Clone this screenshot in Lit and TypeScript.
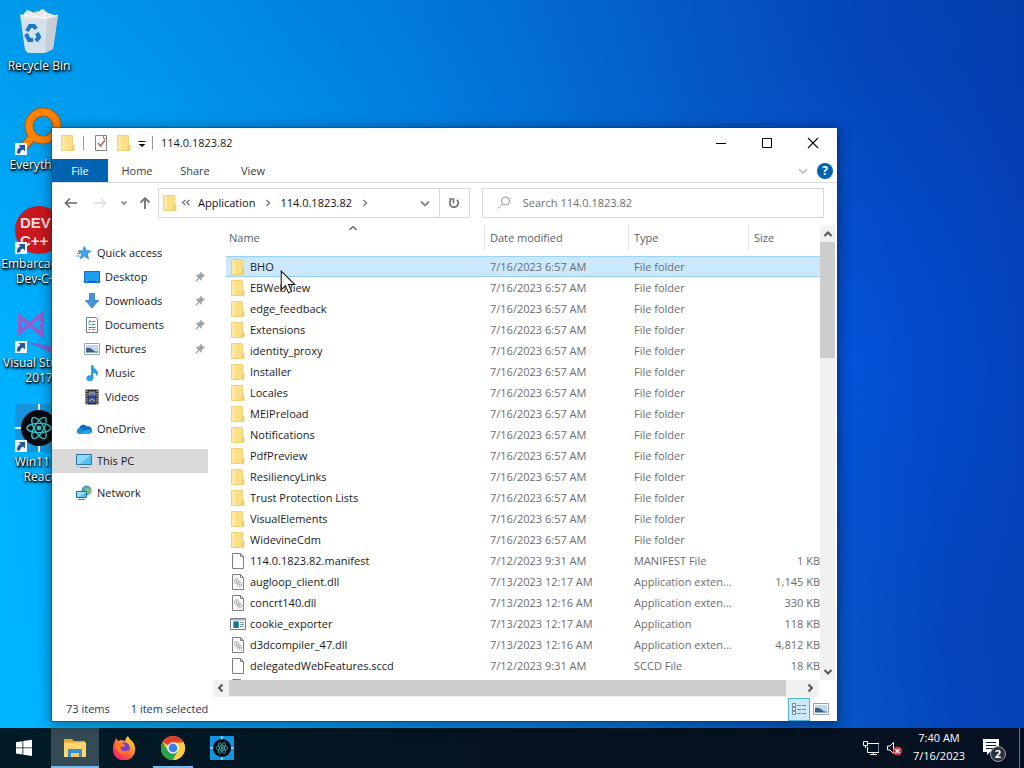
// src/app.ts
import { LitElement, html, css, svg } from 'lit';
import { customElement, state } from 'lit/decorators.js';
import { classMap } from 'lit/directives/class-map.js';

interface FileRow {
  name: string;
  date: string;
  type: string;
  size?: string;
  icon: string;
}

interface NavItem {
  label: string;
  icon: string;
  sub?: boolean;
  pinned?: boolean;
  gap?: boolean;
}

const folders = [
  'BHO', 'EBWebView', 'edge_feedback', 'Extensions', 'identity_proxy', 'Installer', 'Locales',
  'MEIPreload', 'Notifications', 'PdfPreview', 'ResiliencyLinks', 'Trust Protection Lists',
  'VisualElements', 'WidevineCdm',
];

const files: FileRow[] = [
  ...folders.map((name) => ({ name, date: '7/16/2023 6:57 AM', type: 'File folder', icon: 'folder' })),
  { name: '114.0.1823.82.manifest', date: '7/12/2023 9:31 AM', type: 'MANIFEST File', size: '1 KB', icon: 'file' },
  { name: 'augloop_client.dll', date: '7/13/2023 12:17 AM', type: 'Application exten...', size: '1,145 KB', icon: 'dll' },
  { name: 'concrt140.dll', date: '7/13/2023 12:16 AM', type: 'Application exten...', size: '330 KB', icon: 'dll' },
  { name: 'cookie_exporter', date: '7/13/2023 12:17 AM', type: 'Application', size: '118 KB', icon: 'exe' },
  { name: 'd3dcompiler_47.dll', date: '7/13/2023 12:16 AM', type: 'Application exten...', size: '4,812 KB', icon: 'dll' },
  { name: 'delegatedWebFeatures.sccd', date: '7/12/2023 9:31 AM', type: 'SCCD File', size: '18 KB', icon: 'file' },
  { name: '', date: '', type: '', icon: 'dll' },
];

const navItems: NavItem[] = [
  { label: 'Quick access', icon: 'star' },
  { label: 'Desktop', icon: 'desktop', sub: true, pinned: true },
  { label: 'Downloads', icon: 'download', sub: true, pinned: true },
  { label: 'Documents', icon: 'document', sub: true, pinned: true },
  { label: 'Pictures', icon: 'picture', sub: true, pinned: true },
  { label: 'Music', icon: 'music', sub: true },
  { label: 'Videos', icon: 'video', sub: true },
  { label: 'OneDrive', icon: 'cloud', gap: true },
  { label: 'This PC', icon: 'pc', gap: true },
  { label: 'Network', icon: 'network', gap: true },
];

// 16x16 glyphs
const small: Record<string, unknown> = {
  folder: svg`<path d="M1.500.500h11v9.500H14v5.500H1.500z" fill="#fcdf87" stroke="#eccb66" stroke-width=".8"/><path d="M2 1h3v14H2z" fill="#ffe8a0"/><path d="M11.500 10.500H14V15h-2.500z" fill="#f0cd68"/>`,
  file: svg`<path d="M2.500.5h8l3 3v12h-11z" fill="#fdfdfd" stroke="#7e7e7e"/><path d="M10.500.5v3h3" fill="none" stroke="#7e7e7e"/>`,
  dll: svg`<path d="M2.500.5h8l3 3v12h-11z" fill="#fdfdfd" stroke="#7e7e7e"/><path d="M10.500.5v3h3" fill="none" stroke="#7e7e7e"/><g fill="none" stroke="#8b9094"><circle cx="6.500" cy="7" r="2.300" stroke-dasharray="1.500 .6"/><circle cx="6.500" cy="7" r=".6"/><circle cx="9.500" cy="10.500" r="2.300" stroke-dasharray="1.500 .6"/><circle cx="9.500" cy="10.500" r=".6"/></g>`,
  exe: svg`<path d="M.5 2.500h15v11H.5z" fill="#fff" stroke="#75808a"/><path d="M1 3h14v1.500H1z" fill="#a9b4bd"/><path d="M3 5.500h6V12H3z" fill="#38a3b0"/><path d="M4.500 5.500H8V12H4.500z" fill="#1b6f86"/><path d="M10 6.500h4M10 8.500h4M10 10.500h4" stroke="#8a959e"/>`,
  star: svg`<path d="M8.500 1.500l1.700 4.300 4.600.2-3.600 3 1.300 4.700-4-2.600-4.200 2.600 1.400-4.700L2 6l4.700-.2z" fill="#3ea6ea" stroke="#1f7cc7" stroke-width=".8"/><path d="M1 8.500h3M0 11h4" stroke="#3ea6ea"/>`,
  desktop: svg`<path d="M.5 2.500h15v11H.5z" fill="#1e9bf5" stroke="#0b6fc2"/><path d="M1 12.500h14" stroke="#0a5aa5"/><path d="M2 12.500h1M13 12.500h1" stroke="#cfe9ff"/>`,
  download: svg`<path d="M5.500.500h5v7h4L8 15 1.500 7.500h4z" fill="#4795e0" stroke="#2b76c4" stroke-width=".8"/>`,
  document: svg`<path d="M2.500.5h9l2 2v13h-11z" fill="#fff" stroke="#72808c"/><path d="M4.500 5.500l1.500-2 1 2" fill="none" stroke="#1c87a3"/><path d="M8 4.500h3.500M4.500 7.500h2M8 7.500h3.500M4.500 10.500h7M4.500 12.500h2M8 12.500h3.500" stroke="#4794a8"/>`,
  picture: svg`<path d="M.5 2.500h15v11H.5z" fill="#fff" stroke="#98a2aa"/><path d="M2 4h12v8H2z" fill="#bcd8ee"/><path d="M2 7q4-1 7 2t5 1v2H2z" fill="#3d5f7c"/><path d="M2 11h12v1H2z" fill="#89aaca"/>`,
  music: svg`<path d="M7.500.500h1.500q.5 3 3 4.500t1 5.500q-1-3-4-3.500V13a3.200 2.700 0 1 1-1.500-2z" fill="#2da0e4" stroke="#1784cd" stroke-width=".6"/>`,
  video: svg`<path d="M1.500.500h13v15h-13z" fill="#27292d"/><path d="M4.500 2h7v5.500h-7z" fill="#5061c2"/><path d="M4.500 8.500h7V14h-7z" fill="#4158ae"/><path d="M4.500 6l2-3 2 2 1-2 2 3M5 12l3-2 3 2" fill="none" stroke="#c6b84b"/><path d="M3 1.500v14M13 1.500v14" stroke="#e4e4e4" stroke-dasharray="1.500 1"/>`,
  cloud: svg`<path d="M3.500 13a3 3 0 0 1-.5-5.800A4.500 4.500 0 0 1 11 5.500a3.800 3.800 0 0 1 2 7.500z" fill="#0f6cbd"/><path d="M3.500 13a3 3 0 0 1-.5-5.800q2-.8 4 .8l5 5z" fill="#1490df"/><path d="M4 13l6-4 3-.5a2.300 2.300 0 0 1 0 4.500z" fill="#28a8ea"/>`,
  pc: svg`<path d="M.5 1.500h15v10H.5z" fill="#55c0f2" stroke="#2b759f"/><path d="M1 2h14L4 11H1z" fill="#8ddafa"/><path d="M4 14.500h9" stroke="#5f99b7"/><path d="M1 13.500h2M14 13.500h1" stroke="#9cb9c8"/>`,
  network: svg`<circle cx="10.500" cy="5.500" r="5" fill="#4f9cb5"/><path d="M7 2q3 1 2 4t4 3q3-2 2-5" fill="#86bd7b"/><path d="M.5 6.500h10v6H.5z" fill="#5bc1f1" stroke="#236fa6"/><path d="M1 7h9l-8 5H1z" fill="#9be0fb"/><path d="M2 14.500h7" stroke="#4889ad"/>`,
  pin: svg`<path d="M8.500 3l4 4-1.200.3-1.800 1.900-.2 2.300-2.200-2.200L3.500 13l2.800-4.500L4.200 6.300l2.300-.2L8.300 4.200z" fill="#9aa3aa" stroke="#9aa3aa" stroke-width=".6"/>`,
  check: svg`<path d="M2.500.5h11v15h-11z" fill="#fbfafa" stroke="#8a8380"/><path d="M10.500.5v3h3" fill="none" stroke="#8a8380"/><path d="M5 8l2.500 3L12 5" fill="none" stroke="#a2695a" stroke-width="1.400"/>`,
  qat: svg`<path d="M4.500 6.500h7" stroke="#111"/><path d="M4.500 9h7L8 12z" fill="#111"/>`,
  back: svg`<path d="M14 8H2.500M7 3.500L2.500 8 7 12.500" fill="none" stroke="#6a6a6a" stroke-width="1.700"/>`,
  forward: svg`<path d="M2 8h11.500M9 3.500l4.500 4.500L9 12.500" fill="none" stroke="#dcdcdc" stroke-width="1.400"/>`,
  up: svg`<path d="M8 14V3M3.500 7.500L8 3l4.500 4.500" fill="none" stroke="#777" stroke-width="1.900"/>`,
  recent: svg`<path d="M5.500 6.500L8 9l2.500-2.500" fill="none" stroke="#888" stroke-width="1.700"/>`,
  down: svg`<path d="M4 6.500l4 4 4-4" fill="none" stroke="#888" stroke-width="1.900"/>`,
  downLight: svg`<path d="M4 6l4 4 4-4" fill="none" stroke="#b5b5b5" stroke-width="1.500"/>`,
  crumb: svg`<path d="M6.500 5l3 3-3 3" fill="none" stroke="#777" stroke-width="1.400"/>`,
  crumbs: svg`<path d="M7.500 5l-3 2.500 3 2.500M11.500 5l-3 2.500 3 2.500" fill="none" stroke="#666" stroke-width="1.100"/>`,
  refresh: svg`<path d="M11 4.800A4.300 4.300 0 1 1 5 4.800" fill="none" stroke="#777" stroke-width="1.800"/><path d="M3 4h4.500v4.500" fill="none" stroke="#777" stroke-width="1.600"/>`,
  search: svg`<circle cx="9.500" cy="6" r="4" fill="none" stroke="#909090"/><path d="M6.500 9L2 13.500" stroke="#909090"/>`,
  minimize: svg`<path d="M3 8.500h10" stroke="#000"/>`,
  maximize: svg`<path d="M3.500 3.500h9v9h-9z" fill="none" stroke="#000"/>`,
  close: svg`<path d="M3 3l10 10M13 3L3 13" stroke="#000" stroke-width="1.100"/>`,
  arrowUp: svg`<path d="M4.500 10L8 6.500l3.500 3.500" fill="none" stroke="#555" stroke-width="2"/>`,
  arrowDown: svg`<path d="M4.500 6L8 9.500 11.500 6" fill="none" stroke="#555" stroke-width="2"/>`,
  arrowLeft: svg`<path d="M9.500 4.500L6 8l3.500 3.500" fill="none" stroke="#555" stroke-width="2"/>`,
  arrowRight: svg`<path d="M5.500 4.500L9 8l-3.500 3.500" fill="none" stroke="#555" stroke-width="2"/>`,
  sort: svg`<path d="M4.500 10L8 6.500l3.500 3.500" fill="none" stroke="#555" stroke-width="1.100"/>`,
  details: svg`<path d="M1.500 2.500h3v3h-3zM1.500 6.500h3v3h-3zM1.500 10.500h3v3h-3z" fill="#fff" stroke="#728790"/><path d="M6 4.500h4M11 4.500h4M6 8.500h4M11 8.500h4M6 12.500h4M11 12.500h4" stroke="#728790"/>`,
  monitor: svg`<path d="M3.500 3.500H16v9H4.500V7" fill="none" stroke="#fff"/><path d="M.5 1.500h4v4h-4z" fill="#0a1524" stroke="#fff"/><path d="M2.500 5.500V8M7 14.500h7M10.500 12.500v2" stroke="#fff"/>`,
  muted: svg`<path d="M1.500 6h2.500l3.500-3.500v11L4 10H1.500z" fill="none" stroke="#fff"/><circle cx="11.500" cy="11" r="4.500" fill="#d5333f"/><path d="M9.500 9l4 4M13.500 9l-4 4" stroke="#fff" stroke-width="1.300"/>`,
};

const glyph = (name: string) =>
  html`<svg class="glyph" viewBox="0 0 16 16" aria-hidden="true">${small[name]}</svg>`;

const atom = svg`
  <path d="M0 0h24v24H0z" fill="#1593dd"/><path d="M12 0v24M0 12h24" stroke="#e5f6ff" stroke-width="1"/>
  <circle cx="12" cy="12" r="9" fill="#06090d"/>
  <g fill="none" stroke="#38bfc6" stroke-width=".7">
    <ellipse cx="12" cy="12" rx="6" ry="2.300"/>
    <ellipse cx="12" cy="12" rx="6" ry="2.300" transform="rotate(60 12 12)"/>
    <ellipse cx="12" cy="12" rx="6" ry="2.300" transform="rotate(120 12 12)"/>
  </g>
  <circle cx="12" cy="12" r="1.200" fill="#38bfc6"/>`;

const shortcut = svg`<path d="M0 36h12v12H0z" fill="#f5f8fb"/><path d="M2 46.500q-.5-5 3.500-6.500l-2-2H10v6.500l-2-2q-2.500.5-3 4z" fill="#22579f"/>`;

const desktopIcons = [
  {
    label: 'Recycle Bin',
    art: svg`
      <path d="M7 8l5-6 8 3 8-4 5 4 9 3-3 3H9z" fill="#f4f6f8"/>
      <path d="M12 5l4 3 5-5 3 4 6-4 3 5" fill="none" stroke="#c8ced4"/>
      <path d="M5 7h38l-5 34-8 4H13l-3-3z" fill="#e2e6ea" opacity=".93"/>
      <path d="M32 10l11-3-5 34-8 4z" fill="#c3cad0" opacity=".8"/>
      <path d="M5 7l27 3 11-3" fill="none" stroke="#fff"/>
      <g fill="none" stroke="#1976c8" stroke-width="4">
        <path d="M12 23l3-5h4l2 3"/><path d="M22 25l2 4-3 4"/><path d="M18 32h-4l-3-6"/>
      </g>`,
  },
  {
    label: 'Everything',
    link: true,
    art: svg`
      <path d="M18 29L7 42" stroke="#9b5a19" stroke-width="9"/>
      <circle cx="28" cy="19" r="14" fill="none" stroke="#9b5a19" stroke-width="9"/>
      <circle cx="28" cy="19" r="14" fill="none" stroke="#ff8200" stroke-width="7"/>
      <path d="M19 28L7 42" stroke="#ff8200" stroke-width="7"/>`,
  },
  {
    label: 'Embarcadero Dev-C++',
    link: true,
    art: svg`
      <circle cx="24" cy="24" r="24" fill="#c9181f"/>
      <text class="dev" x="5" y="22">DEV</text>
      <text class="dev" x="5" y="40">C++</text>`,
  },
  {
    label: 'Visual Studio 2017',
    link: true,
    art: svg`
      <path d="M5 12v15l22-18v21z" fill="none" stroke="#8f5fd0" stroke-width="4"/>
      <path d="M12 37l24 4v7l-8-4z" fill="#7d5fce"/>`,
  },
  {
    label: 'Win11 in React',
    link: true,
    art: svg`<g transform="scale(2)">${atom}</g>`,
  },
];

@customElement('app-root')
export class AppRoot extends LitElement {
  static styles = css`
    :host {
      display: flex;
      flex-direction: column;
      height: 100vh;
      overflow: hidden;
      font-family: 'Open Sans', 'Noto Sans', sans-serif;
      font-size: 11px;
      line-height: 16px;
      color: #1a1a1a;
      background:
        radial-gradient(ellipse 240px 320px at 83% 46%, rgba(0, 86, 240, 0.5), rgba(0, 80, 225, 0)),
        linear-gradient(180deg, rgba(0, 70, 160, 0.2), rgba(0, 70, 160, 0) 45%),
        linear-gradient(82deg, #00b6ff 0%, #00a4fa 22%, #0086e8 46%, #0560d0 68%, #0544ba 86%, #043cb0 100%);
    }
    * {
      box-sizing: border-box;
    }
    button, input {
      font: inherit;
      color: inherit;
      margin: 0;
      padding: 0;
      border: 0;
      background: none;
    }
    button {
      display: flex;
      align-items: center;
      justify-content: center;
    }
    a {
      color: inherit;
      text-decoration: none;
    }
    .glyph {
      width: 16px;
      height: 16px;
      flex: none;
      display: block;
    }
    .desktop {
      position: relative;
      flex: 1;
      min-height: 0;
    }
    .shortcuts {
      display: flex;
      flex-direction: column;
      width: 78px;
      height: 100%;
      overflow: hidden;
    }
    .shortcut {
      display: flex;
      flex-direction: column;
      align-items: center;
      flex: none;
      height: 99px;
      padding-top: 8px;
      gap: 2px;
      text-align: center;
      color: #fff;
      font-size: 12px;
      line-height: 15px;
      text-shadow: 1px 1px 2px #000, 0 1px 2px #000, 1px 2px 3px rgba(0, 0, 0, 0.7);
    }
    .shortcut svg {
      width: 48px;
      height: 48px;
      flex: none;
    }
    .dev {
      font: bold 15px 'Liberation Sans', sans-serif;
      fill: #f7dede;
      text-shadow: none;
    }

    /* Explorer window */
    .window {
      position: absolute;
      left: 51px;
      top: 127px;
      right: 186px;
      bottom: 6px;
      display: flex;
      flex-direction: column;
      background: #fff;
      background-clip: padding-box;
      border: 1px solid rgba(0, 60, 120, 0.4);
      box-shadow: 0 2px 12px rgba(0, 0, 0, 0.45);
    }
    .titlebar {
      display: flex;
      align-items: center;
      height: 31px;
      flex: none;
      padding: 0 1px 1px 8px;
    }
    .divider {
      width: 1px;
      height: 14px;
      background: #999;
    }
    .quick {
      display: flex;
      align-items: center;
      gap: 7px;
      margin-right: 8px;
    }
    .quick .glyph + .divider + .glyph {
      margin-left: 2px;
    }
    .quick .glyph:last-of-type {
      margin: 0 -5px;
    }
    .title {
      flex: 1;
    }
    .caption {
      width: 46px;
      height: 30px;
    }
    .tabs {
      display: flex;
      align-items: center;
      flex: none;
      height: 24px;
      border-bottom: 1px solid #dadbdc;
      padding-right: 4px;
    }
    .tab {
      width: 58px;
      height: 23px;
      color: #3b3b3b;
    }
    .tab.file {
      width: 56px;
      background: #0063b1;
      color: #fff;
    }
    .tabs .expand {
      margin-left: auto;
      margin-right: 6px;
    }
    .help {
      width: 16px;
      height: 16px;
      border-radius: 50%;
      background: #0063b1;
      color: #fff;
      font-weight: bold;
      font-size: 12px;
    }
    .location {
      display: flex;
      flex: none;
      height: 41px;
      padding: 5px 13px 6px 5px;
    }
    .history {
      display: flex;
    }
    .history button {
      width: 28px;
    }
    .history .forward {
      width: 30px;
    }
    .history .recent {
      width: 18px;
    }
    .history .up {
      width: 24px;
      margin-right: 1px;
    }
    .address {
      display: flex;
      align-items: center;
      flex: 15;
      border: 1px solid #d9d9d9;
      padding-left: 3px;
    }
    .address .crumb {
      color: #111;
      margin: 0 5px 0 4px;
    }
    .address .history-drop {
      margin-left: auto;
      width: 28px;
      height: 28px;
    }
    .address .refresh {
      width: 30px;
      height: 28px;
      border-left: 1px solid #d9d9d9;
    }
    .search {
      display: flex;
      align-items: center;
      flex: 16;
      margin-left: 12px;
      padding-left: 13px;
      gap: 11px;
      border: 1px solid #d9d9d9;
    }
    .search input {
      flex: 1;
      min-width: 0;
      outline: none;
    }
    .search input::placeholder {
      color: #6d6d6d;
      opacity: 1;
    }
    .body {
      display: flex;
      flex: 1;
      min-height: 0;
    }
    .nav {
      flex: none;
      width: 161px;
      padding: 17px 5px 0 0;
      overflow: hidden;
    }
    .nav-item {
      display: flex;
      align-items: center;
      gap: 5px;
      height: 24px;
      padding-left: 24px;
    }
    .nav-item.sub {
      padding-left: 32px;
    }
    .nav-item.gap {
      margin-top: 8px;
    }
    .nav-item.current {
      background: #d9d9d9;
    }
    .nav-item .pin {
      margin-left: auto;
    }
    .files {
      display: flex;
      flex-direction: column;
      flex: 1;
      min-width: 0;
    }
    .view {
      display: flex;
      flex: 1;
      min-height: 0;
      padding-right: 2px;
    }
    .rows {
      flex: 1;
      min-width: 0;
      overflow: hidden;
      padding-left: 13px;
    }
    table {
      width: 100%;
      table-layout: fixed;
      border-collapse: collapse;
    }
    th {
      position: relative;
      height: 32px;
      padding: 0 0 5px;
      font-weight: normal;
      text-align: left;
      color: #56616e;
    }
    th span {
      display: block;
      height: 27px;
      padding-left: 5px;
      line-height: 28px;
      border-left: 1px solid #e5e5e5;
    }
    th:first-child span {
      padding-left: 2px;
      border-color: transparent;
    }
    th .glyph {
      position: absolute;
      left: calc(50% - 10px);
      top: -4px;
    }
    .date {
      width: 144px;
    }
    .type {
      width: 120px;
    }
    .size {
      width: 72px;
    }
    td {
      height: 21px;
      padding: 0 0 0 6px;
      white-space: nowrap;
      color: #6d6d6d;
    }
    td.name {
      padding-left: 4px;
      color: #1a1a1a;
    }
    td.bytes {
      padding: 0;
      text-align: right;
    }
    .entry {
      display: flex;
      align-items: center;
      gap: 4px;
    }
    tr.selected td {
      background: #cce8ff;
      box-shadow: inset 0 1px #99d1ff, inset 0 -1px #99d1ff;
    }
    .vscroll {
      display: flex;
      flex-direction: column;
      width: 15px;
      margin-top: 2px;
      background: #f1f1f1;
    }
    .vscroll button {
      width: 15px;
      height: 16px;
    }
    .vtrack {
      flex: 1;
    }
    .vthumb {
      height: 27.5%;
      background: #cdcdcd;
    }
    .hscroll {
      display: flex;
      flex: none;
      height: 17px;
      margin-right: 18px;
      padding-bottom: 1px;
      background: #f1f1f1;
    }
    .hscroll button {
      width: 16px;
      height: 16px;
    }
    .htrack {
      flex: 1;
    }
    .hthumb {
      width: 97%;
      height: 16px;
      background: #cdcdcd;
    }
    .status {
      display: flex;
      align-items: center;
      flex: none;
      height: 24px;
      padding: 0 8px 0 14px;
      gap: 21px;
      color: #26375c;
    }
    .views {
      display: flex;
      margin-left: auto;
      align-items: center;
      gap: 3px;
    }
    .views button {
      width: 16px;
      height: 23px;
    }
    .views .active {
      width: 22px;
      background: #cbe9f7;
      border: 1px solid #4fb0d8;
    }
    .pointer {
      position: absolute;
      left: 280px;
      top: 270px;
      width: 16px;
      height: 26px;
    }

    /* Taskbar */
    .taskbar {
      display: flex;
      align-items: stretch;
      flex: none;
      height: 40px;
      color: #fff;
      background: linear-gradient(90deg, #031b28, #04131f 50%, #061022);
    }
    .apps {
      display: flex;
      gap: 1px;
      flex: 1;
    }
    .app {
      width: 48px;
      border-bottom: 2px solid transparent;
      border-top: 2px solid transparent;
    }
    .app svg {
      width: 24px;
      height: 24px;
    }
    .app.start {
      width: 50px;
      padding-right: 2px;
    }
    .app.focused {
      background: #344a55;
      border-top-color: #344a55;
      border-bottom-color: #76b9ed;
    }
    .app.running {
      width: 40px;
      margin: 0 4px;
      border-bottom-color: #76b9ed;
    }
    .tray {
      display: flex;
      align-items: center;
    }
    .tray .glyph {
      margin-right: 7px;
    }
    .clock {
      width: 60px;
      text-align: center;
      line-height: 18px;
      padding-bottom: 2px;
      margin-right: 11px;
    }
    .notify svg {
      width: 28px;
      height: 28px;
    }
    .badge {
      font: bold 11px 'Open Sans', sans-serif;
      fill: #fff;
    }
    .peek {
      width: 5px;
      height: 40px;
      margin-left: 11px;
      border-left: 1px solid #6b7482;
    }
  `;

  @state()
  private selected = 'BHO';

  private renderWindow() {
    return html`
      <section class="window" aria-label="File Explorer">
        <header class="titlebar">
          <div class="quick">
            ${glyph('folder')}
            <span class="divider"></span>
            ${glyph('check')}
            ${glyph('folder')}
            ${glyph('qat')}
            <span class="divider"></span>
          </div>
          <span class="title">114.0.1823.82</span>
          <button class="caption" aria-label="Minimize">${glyph('minimize')}</button>
          <button class="caption" aria-label="Maximize">${glyph('maximize')}</button>
          <button class="caption" aria-label="Close">${glyph('close')}</button>
        </header>

        <div class="tabs">
          <button class="tab file">File</button>
          <button class="tab">Home</button>
          <button class="tab">Share</button>
          <button class="tab">View</button>
          <button class="expand" aria-label="Expand the Ribbon">${glyph('downLight')}</button>
          <button class="help" aria-label="Help">?</button>
        </div>

        <div class="location">
          <div class="history">
            <button aria-label="Back">${glyph('back')}</button>
            <button class="forward" aria-label="Forward">${glyph('forward')}</button>
            <button class="recent" aria-label="Recent locations">${glyph('recent')}</button>
            <button class="up" aria-label="Up">${glyph('up')}</button>
          </div>
          <div class="address">
            ${glyph('folder')}
            <button aria-label="Parent folders">${glyph('crumbs')}</button>
            <button class="crumb">Application</button>
            ${glyph('crumb')}
            <button class="crumb">114.0.1823.82</button>
            ${glyph('crumb')}
            <button class="history-drop" aria-label="Previous locations">${glyph('down')}</button>
            <button class="refresh" aria-label="Refresh">${glyph('refresh')}</button>
          </div>
          <label class="search">
            ${glyph('search')}
            <input type="text" aria-label="Search" placeholder="Search 114.0.1823.82" />
          </label>
        </div>

        <div class="body">
          <nav class="nav">
            ${navItems.map(
              (item) => html`
                <a
                  href="#"
                  class=${classMap({
                    'nav-item': true,
                    sub: !!item.sub,
                    gap: !!item.gap,
                    current: item.label === 'This PC',
                  })}
                >
                  ${glyph(item.icon)} ${item.label}
                  ${item.pinned ? html`<span class="pin">${glyph('pin')}</span>` : ''}
                </a>
              `
            )}
          </nav>
          ${this.renderFiles()}
        </div>

        <footer class="status">
          <span>73 items</span>
          <span>1 item selected</span>
          <div class="views">
            <button class="active" aria-label="Details">${glyph('details')}</button>
            <button aria-label="Large icons">${glyph('picture')}</button>
          </div>
        </footer>
      </section>
    `;
  }

  private renderFiles() {
    return html`
      <div class="files">
        <div class="view">
          <div class="rows">
            <table>
              <thead>
                <tr>
                  <th><span>Name</span>${glyph('sort')}</th>
                  <th class="date"><span>Date modified</span></th>
                  <th class="type"><span>Type</span></th>
                  <th class="size"><span>Size</span></th>
                </tr>
              </thead>
              <tbody>
                ${files.map(
                  (file) => html`
                    <tr
                      class=${classMap({ selected: file.name === this.selected })}
                      @click=${() => (this.selected = file.name)}
                    >
                      <td class="name"><div class="entry">${glyph(file.icon)}${file.name}</div></td>
                      <td>${file.date}</td>
                      <td>${file.type}</td>
                      <td class="bytes">${file.size ?? ''}</td>
                    </tr>
                  `
                )}
              </tbody>
            </table>
          </div>
          <div class="vscroll">
            <button aria-label="Scroll up">${glyph('arrowUp')}</button>
            <div class="vtrack"><div class="vthumb"></div></div>
            <button aria-label="Scroll down">${glyph('arrowDown')}</button>
          </div>
        </div>
        <div class="hscroll">
          <button aria-label="Scroll left">${glyph('arrowLeft')}</button>
          <div class="htrack"><div class="hthumb"></div></div>
          <button aria-label="Scroll right">${glyph('arrowRight')}</button>
        </div>
      </div>
    `;
  }

  private renderTaskbar() {
    return html`
      <footer class="taskbar">
        <div class="apps">
          <button class="app start" aria-label="Start">
            <svg viewBox="0 0 24 24">
              <path d="M4 6.200l6.500-1v6.300H4zM11.300 5l8.700-1.200v7.700h-8.700zM4 12.300h6.500v6.300L4 17.600zM11.300 12.300H20V20l-8.700-1.200z" fill="#fff" />
            </svg>
          </button>
          <button class="app focused" aria-label="File Explorer">
            <svg viewBox="0 0 24 24">
              <path d="M1 3h8l2 2h11v4H1z" fill="#e8a62c" />
              <path d="M1 6.500h22V21H1z" fill="#ffd76e" />
              <path d="M5 13h14v8h-3v-4H8v4H5z" fill="#3a8fd0" />
              <path d="M8 17h8v4H8z" fill="#f6c95a" />
            </svg>
          </button>
          <button class="app" aria-label="Firefox">
            <svg viewBox="0 0 24 24">
              <defs>
                <linearGradient id="fox" x1="1" y1="0" x2="0.200" y2="1">
                  <stop offset="0" stop-color="#fff04a" />
                  <stop offset=".4" stop-color="#ff9a28" />
                  <stop offset=".75" stop-color="#ff4545" />
                  <stop offset="1" stop-color="#e32080" />
                </linearGradient>
              </defs>
              <path d="M3 5l1-3 2 3 3-1 4 1q0-3 3-5 1 3 4 5 4 4 3 9a11 10.500 0 0 1-22 0Q.500 8.500 3 5z" fill="url(#fox)" />
              <path d="M9 7q6-2 8 2t-1 7q-4 3-8 0t-1-6l5 1 1-2z" fill="#7a3fd0" />
              <path d="M3 9q3-3 7-2l3 2-4 2q-1 4 3 4t5-2q-1 5-6 5-7-1-8-9z" fill="#ff7a2c" />
            </svg>
          </button>
          <button class="app running" aria-label="Chrome">
            <svg viewBox="0 0 24 24">
              <circle cx="12" cy="12" r="12" fill="#ffcd40" />
              <path d="M12 12L1.600 6A12 12 0 0 1 22.400 6z" fill="#e33b2e" />
              <path d="M1.600 6A12 12 0 0 0 12 24l5.200-9L12 12 7 15z" fill="#28a34c" />
              <path d="M12 6.500h10.600A12 12 0 0 1 12 24l5-9z" fill="#ffcd40" />
              <circle cx="12" cy="12" r="5.700" fill="#fff" />
              <circle cx="12" cy="12" r="4.400" fill="#3b7fee" />
            </svg>
          </button>
          <button class="app" aria-label="Win11 in React">
            <svg viewBox="0 0 24 24">${atom}</svg>
          </button>
        </div>
        <div class="tray">
          ${glyph('monitor')} ${glyph('muted')}
          <div class="clock">7:40 AM<br />7/16/2023</div>
          <button class="notify" aria-label="Notifications">
            <svg viewBox="0 0 28 28">
              <path d="M3 5h16v13h-9l-3 3v-3H3z" fill="#fff" />
              <path d="M6 8.500h10M6 11.500h10M6 14.500h7" stroke="#101b2b" />
              <circle cx="18" cy="20" r="7.500" fill="#2b3340" stroke="#9aa1aa" />
              <text x="18" y="24" text-anchor="middle" class="badge">2</text>
            </svg>
          </button>
          <div class="peek"></div>
        </div>
      </footer>
    `;
  }

  render() {
    return html`
      <main class="desktop">
        <div class="shortcuts">
          ${desktopIcons.map(
            (icon) => html`
              <a href="#" class="shortcut">
                <svg viewBox="0 0 48 48" aria-hidden="true">${icon.art}${icon.link ? shortcut : ''}</svg>
                ${icon.label}
              </a>
            `
          )}
        </div>
        ${this.renderWindow()}
        <svg class="pointer" viewBox="0 0 15 25" aria-hidden="true">
          <path d="M1 1v18l4-4 3 7 3-1.500-3-6.500h6z" fill="#fff" stroke="#111" />
        </svg>
      </main>
      ${this.renderTaskbar()}
    `;
  }
}
